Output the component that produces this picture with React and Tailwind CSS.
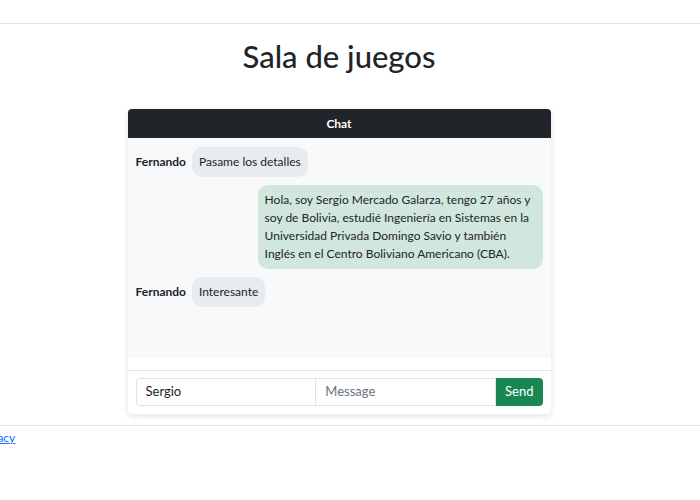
import React from "react";

const messages = [
  { user: "Fernando", text: "Pasame los detalles", mine: false },
  {
    user: "Sergio",
    text: "Hola, soy Sergio Mercado Galarza, tengo 27 años y soy de Bolivia, estudié Ingeniería en Sistemas en la Universidad Privada Domingo Savio y también Inglés en el Centro Boliviano Americano (CBA).",
    mine: true,
  },
  { user: "Fernando", text: "Interesante", mine: false },
];

function Message({ msg }) {
  if (msg.mine) {
    return (
      <div className="flex justify-end mb-2">
        <div className="max-w-[70%] bg-[#d1e7dd] rounded-[10px] px-[7px] py-[6px] leading-[18px]">
          {msg.text}
        </div>
      </div>
    );
  }
  return (
    <div className="flex items-center mb-2">
      <span className="font-bold mr-[6px]">{msg.user}</span>
      <div className="bg-[#e9ecef] rounded-[10px] px-[7px] py-[6px] leading-[18px]">
        {msg.text}
      </div>
    </div>
  );
}

export default function App() {
  return (
    <div
      className="min-h-[500px] bg-white text-[#212529] text-[12px] overflow-hidden"
      style={{ fontFamily: 'Lato, "Noto Sans", sans-serif' }}
    >
      {/* Navbar placeholder */}
      <div className="h-[24px] border-b border-[#e5e5e5]" />

      <main className="w-[678px] flex flex-col items-center">
        <h1 className="text-[31px] font-medium leading-none mt-[17px] mb-[37px]">
          Sala de juegos
        </h1>

        <div className="w-[423px] bg-white rounded shadow-[0_2px_6px_rgba(0,0,0,0.12)] mb-[11px]">
          <div className="bg-[#212529] text-white font-bold text-center h-[29px] flex items-center justify-center rounded-t">
            Chat
          </div>
          <div className="h-[220px] bg-[#f8f9fa] px-2 pt-[9px] overflow-y-auto">
            {messages.map((m, i) => (
              <Message key={i} msg={m} />
            ))}
          </div>
          <div className="h-[12px]" />
          <div className="border-t border-[#dee2e6] px-2 pt-[7px] pb-2">
            <div className="flex h-[28px] text-[13px]">
              <input
                className="flex-1 min-w-0 border border-[#dee2e6] rounded-l px-[9px] outline-none bg-white"
                defaultValue="Sergio"
              />
              <input
                className="flex-1 min-w-0 border border-l-0 border-[#dee2e6] px-[9px] outline-none bg-white placeholder:text-[#6c757d]"
                placeholder="Message"
              />
              <button className="bg-[#198754] text-white px-[9px] rounded-r">
                Send
              </button>
            </div>
          </div>
        </div>
      </main>

      <footer className="border-t border-[#e5e5e5] pt-[3px]">
        <a href="#" className="text-[#0d6efd] underline -ml-[23px]">
          Privacy
        </a>
      </footer>
    </div>
  );
}
